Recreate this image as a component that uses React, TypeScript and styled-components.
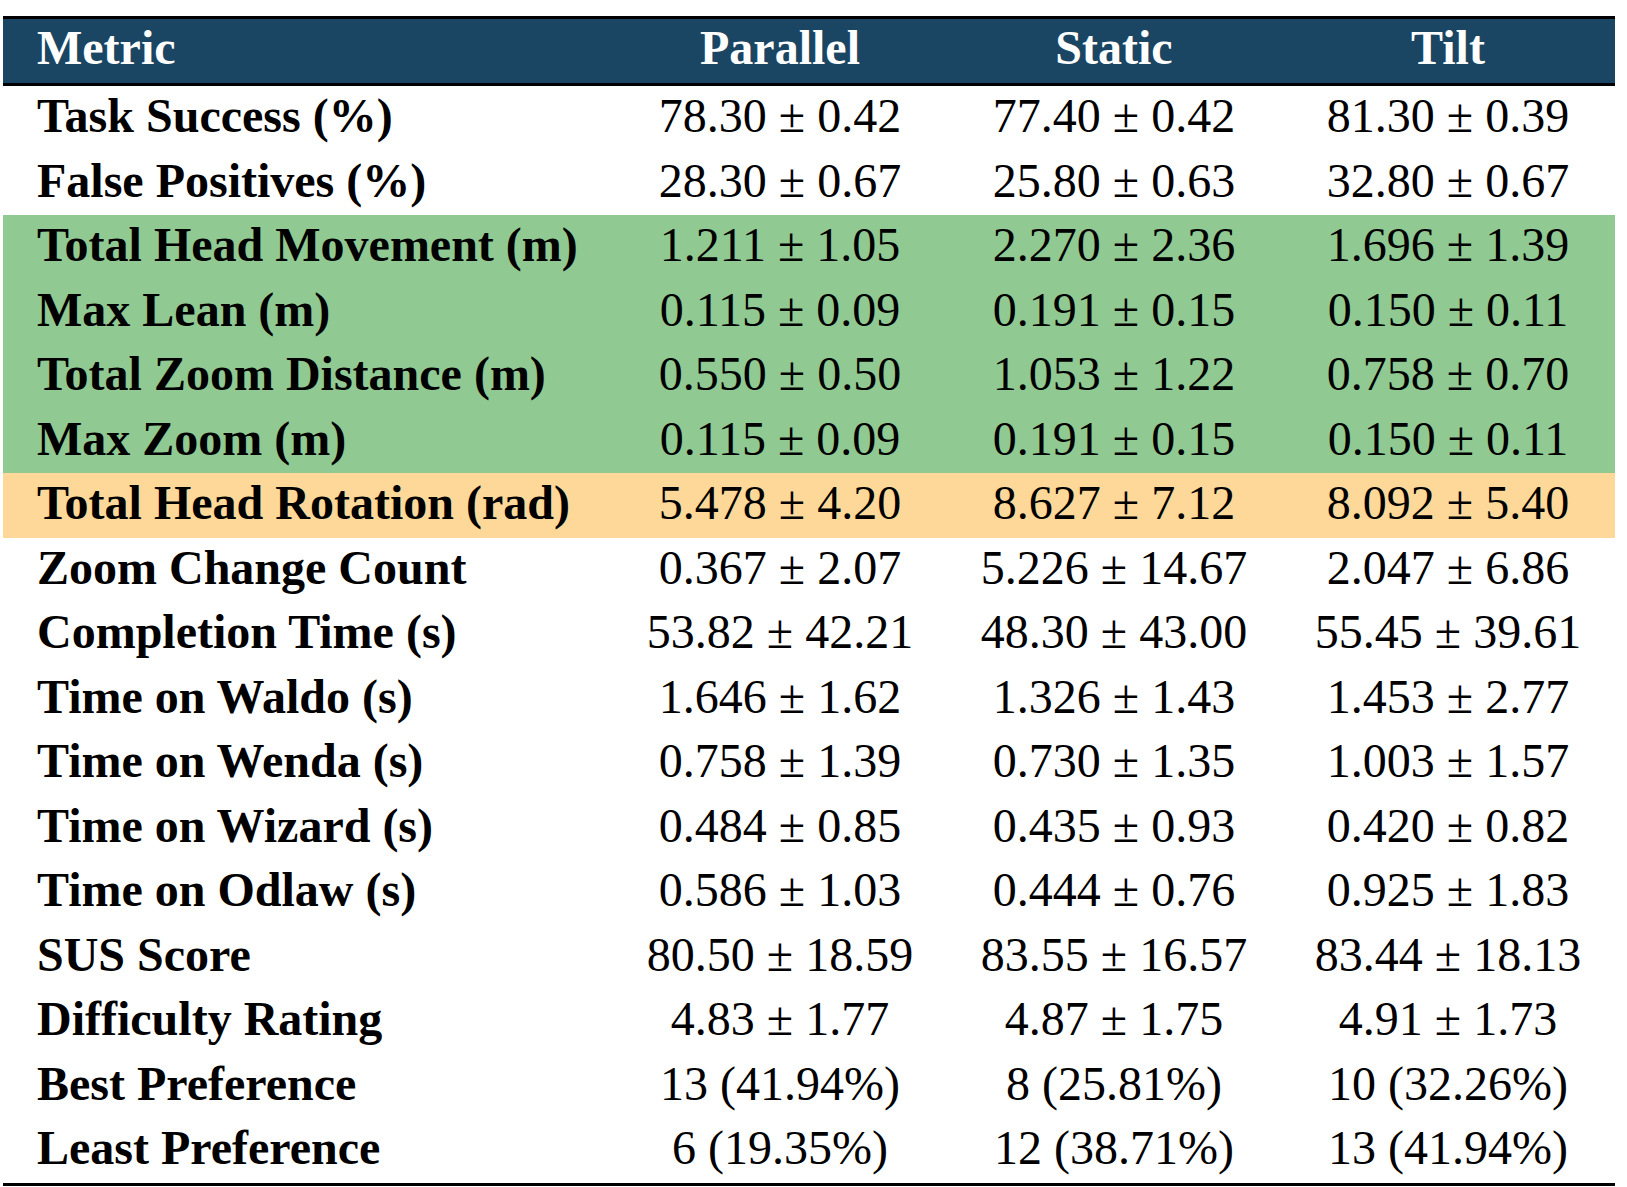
import * as React from 'react';
import styled, { createGlobalStyle } from 'styled-components';

const GlobalStyle = createGlobalStyle`
  html, body {
    margin: 0;
    padding: 0;
    background: #fff;
  }
  *, *::before, *::after {
    box-sizing: border-box;
  }
  body {
    font-family: "Liberation Serif", "Times New Roman", serif;
    color: #000;
  }
`;

type Tone = 'plain' | 'green' | 'orange';

interface Row {
  label: string;
  values: [string, string, string];
  tone?: Tone;
}

const rows: Row[] = [
  { label: 'Task Success (%)', values: ['78.30 ± 0.42', '77.40 ± 0.42', '81.30 ± 0.39'] },
  { label: 'False Positives (%)', values: ['28.30 ± 0.67', '25.80 ± 0.63', '32.80 ± 0.67'] },
  { label: 'Total Head Movement (m)', values: ['1.211 ± 1.05', '2.270 ± 2.36', '1.696 ± 1.39'], tone: 'green' },
  { label: 'Max Lean (m)', values: ['0.115 ± 0.09', '0.191 ± 0.15', '0.150 ± 0.11'], tone: 'green' },
  { label: 'Total Zoom Distance (m)', values: ['0.550 ± 0.50', '1.053 ± 1.22', '0.758 ± 0.70'], tone: 'green' },
  { label: 'Max Zoom (m)', values: ['0.115 ± 0.09', '0.191 ± 0.15', '0.150 ± 0.11'], tone: 'green' },
  { label: 'Total Head Rotation (rad)', values: ['5.478 ± 4.20', '8.627 ± 7.12', '8.092 ± 5.40'], tone: 'orange' },
  { label: 'Zoom Change Count', values: ['0.367 ± 2.07', '5.226 ± 14.67', '2.047 ± 6.86'] },
  { label: 'Completion Time (s)', values: ['53.82 ± 42.21', '48.30 ± 43.00', '55.45 ± 39.61'] },
  { label: 'Time on Waldo (s)', values: ['1.646 ± 1.62', '1.326 ± 1.43', '1.453 ± 2.77'] },
  { label: 'Time on Wenda (s)', values: ['0.758 ± 1.39', '0.730 ± 1.35', '1.003 ± 1.57'] },
  { label: 'Time on Wizard (s)', values: ['0.484 ± 0.85', '0.435 ± 0.93', '0.420 ± 0.82'] },
  { label: 'Time on Odlaw (s)', values: ['0.586 ± 1.03', '0.444 ± 0.76', '0.925 ± 1.83'] },
  { label: 'SUS Score', values: ['80.50 ± 18.59', '83.55 ± 16.57', '83.44 ± 18.13'] },
  { label: 'Difficulty Rating', values: ['4.83 ± 1.77', '4.87 ± 1.75', '4.91 ± 1.73'] },
  { label: 'Best Preference', values: ['13 (41.94%)', '8 (25.81%)', '10 (32.26%)'] },
  { label: 'Least Preference', values: ['6 (19.35%)', '12 (38.71%)', '13 (41.94%)'] },
];

const toneColors: Record<Tone, string> = {
  plain: 'transparent',
  green: '#91c992',
  orange: '#fdd898',
};

const Page = styled.div`
  padding: 16px 12px 0 3px;
`;

const Table = styled.div`
  width: 1612px;
  border-top: 3px solid #000;
  border-bottom: 3px solid #000;
`;

const Grid = styled.div<{ $tone?: Tone; $height: number }>`
  display: grid;
  grid-template-columns: 610px repeat(3, 334px);
  align-items: center;
  height: ${p => p.$height}px;
  background: ${p => toneColors[p.$tone || 'plain']};
  font-size: 48px;
  line-height: 1;
`;

const HeaderRow = styled(Grid)`
  background: #1a4563;
  color: #fff;
  font-weight: bold;
  border-bottom: 3px solid #000;
  padding-bottom: 3px;
`;

const LabelCell = styled.div`
  padding-left: 34px;
  font-weight: bold;
  white-space: nowrap;
  padding-bottom: 4px;
`;

const ValueCell = styled.div`
  text-align: center;
  white-space: nowrap;
  padding-bottom: 4px;
`;

const HeadCell = styled(ValueCell)``;

export default function App() {
  return (
    <>
      <GlobalStyle />
      <Page>
        <Table>
          <HeaderRow $height={67}>
            <LabelCell>Metric</LabelCell>
            <HeadCell>Parallel</HeadCell>
            <HeadCell>Static</HeadCell>
            <HeadCell>Tilt</HeadCell>
          </HeaderRow>
          {rows.map(row => (
            <Grid key={row.label} $tone={row.tone} $height={64.5}>
              <LabelCell>{row.label}</LabelCell>
              {row.values.map((v, i) => (
                <ValueCell key={i}>{v}</ValueCell>
              ))}
            </Grid>
          ))}
        </Table>
      </Page>
    </>
  );
}
